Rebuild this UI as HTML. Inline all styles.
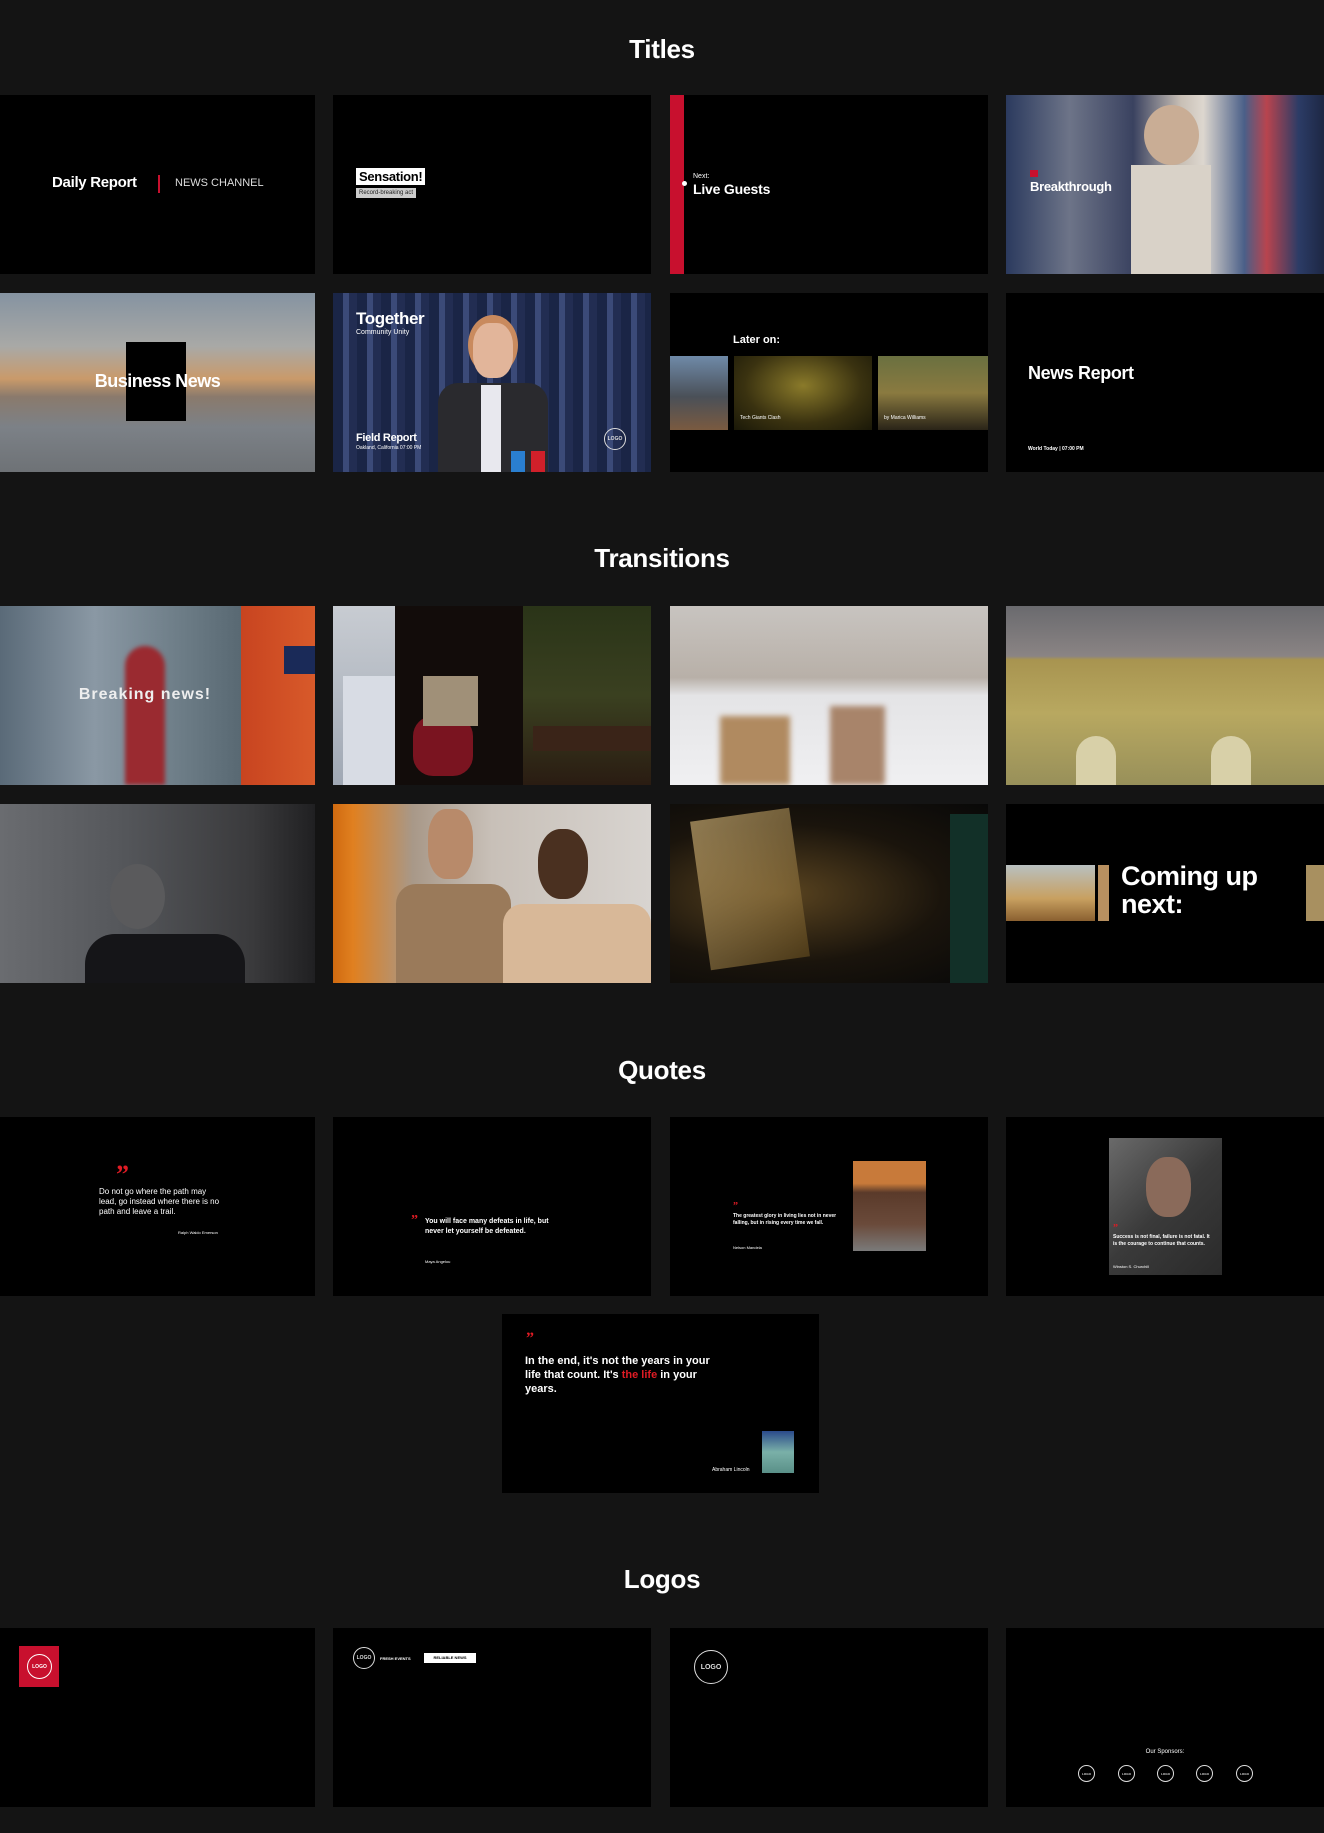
<!DOCTYPE html>
<html><head><meta charset="utf-8"><style>
*{margin:0;padding:0;box-sizing:border-box}
body{width:1324px;height:1833px;background:#141414;position:relative;overflow:hidden;font-family:"Liberation Sans",sans-serif;color:#fff}
.h{position:absolute;left:0;width:1324px;text-align:center;font-weight:bold;font-size:26px;letter-spacing:-0.3px}
.t{position:absolute;background:#000;overflow:hidden;height:179px}
.c0{left:0;width:315px}.c1{left:333px;width:318px}.c2{left:670px;width:318px}.c3{left:1006px;width:318px}
.a{position:absolute}
.b{font-weight:bold}
.circ{position:absolute;border:1.5px solid #ddd;border-radius:50%;font-size:5px;color:#ddd;display:flex;align-items:center;justify-content:center;font-weight:bold}
.q{color:#e01b24;font-weight:bold;font-family:"Liberation Serif",serif}
</style></head><body>

<div class="h" style="top:34px">Titles</div>
<div class="h" style="top:543px">Transitions</div>
<div class="h" style="top:1055px">Quotes</div>
<div class="h" style="top:1564px">Logos</div>

<!-- Row 1 -->
<div class="t c0" style="top:95px">
  <div class="a b" style="left:52px;top:79px;font-size:15px;letter-spacing:-0.3px">Daily Report</div>
  <div class="a" style="left:158px;top:80px;width:2px;height:18px;background:#c8102e"></div>
  <div class="a" style="left:175px;top:82px;font-size:11px;color:#ddd">NEWS CHANNEL</div>
</div>
<div class="t c1" style="top:95px">
  <div class="a" style="left:23px;top:73px;background:#fff;color:#000;font-size:13px;padding:1px 3px;font-weight:bold;letter-spacing:-0.3px">Sensation!</div>
  <div class="a" style="left:23px;top:93px;background:#ccc;color:#222;font-size:6px;padding:2px 3px">Record-breaking act</div>
</div>
<div class="t c2" style="top:95px">
  <div class="a" style="left:0;top:0;width:14px;height:179px;background:#c8102e"></div>
  <div class="a" style="left:12px;top:86px;width:5px;height:5px;border-radius:50%;background:#fff"></div>
  <div class="a" style="left:23px;top:78px;font-size:7px">Next:</div>
  <div class="a b" style="left:23px;top:86px;font-size:14px;letter-spacing:-0.2px">Live Guests</div>
</div>
<div class="t c3" style="top:95px;background:linear-gradient(90deg,#2b3a5e 0%,#6d7488 20%,#3a4260 40%,#c8bfb5 55%,#ddd7cf 62%,#4a5f88 75%,#b8444e 82%,#2c3c66 92%,#1d2744 100%)">
  <div class="a" style="left:138px;top:10px;width:55px;height:60px;border-radius:50%;background:#c9ad95"></div>
  <div class="a" style="left:125px;top:70px;width:80px;height:109px;background:#d9d2c8"></div>
  <div class="a" style="left:24px;top:75px;width:8px;height:7px;background:#c8102e"></div>
  <div class="a b" style="left:24px;top:84px;font-size:13px;letter-spacing:-0.3px">Breakthrough</div>
</div>

<!-- Row 2 -->
<div class="t c0" style="top:293px;background:linear-gradient(180deg,#8593a1 0%,#a9a9a6 30%,#c99a6a 48%,#8a7a6c 58%,#7c8187 75%,#6e7276 100%)">
  <div class="a" style="left:126px;top:49px;width:60px;height:79px;background:#000"></div>
  <div class="a b" style="left:0;width:315px;text-align:center;top:78px;font-size:18px;letter-spacing:-0.5px">Business News</div>
</div>
<div class="t c1" style="top:293px;background:repeating-linear-gradient(90deg,#1a2546 0 10px,#3b4a78 10px 16px,#222d52 16px 24px)">
  <div class="a" style="left:135px;top:22px;width:50px;height:60px;border-radius:50%;background:#c98a5e"></div>
  <div class="a" style="left:140px;top:30px;width:40px;height:55px;border-radius:40%;background:#e2b59a"></div>
  <div class="a" style="left:105px;top:90px;width:110px;height:89px;background:#2a2a2e;border-radius:20px 20px 0 0"></div>
  <div class="a" style="left:148px;top:92px;width:20px;height:87px;background:#e8e8ee"></div>
  <div class="a" style="left:178px;top:158px;width:14px;height:21px;background:#2a7fd0"></div>
  <div class="a" style="left:198px;top:158px;width:14px;height:21px;background:#d0202a"></div>
  <div class="a b" style="left:23px;top:16px;font-size:17px;letter-spacing:-0.4px">Together</div>
  <div class="a" style="left:23px;top:36px;font-size:7px">Community Unity</div>
  <div class="a b" style="left:23px;top:139px;font-size:11px;letter-spacing:-0.3px">Field Report</div>
  <div class="a" style="left:23px;top:152px;font-size:5px">Oakland, California 07:00 PM</div>
  <div class="circ" style="left:271px;top:135px;width:22px;height:22px">LOGO</div>
</div>
<div class="t c2" style="top:293px">
  <div class="a b" style="left:63px;top:41px;font-size:11px">Later on:</div>
  <div class="a" style="left:0;top:63px;width:58px;height:74px;background:linear-gradient(180deg,#6f8aa8,#4a5058 55%,#7a5a40)"></div>
  <div class="a" style="left:64px;top:63px;width:138px;height:74px;background:radial-gradient(ellipse at 50% 40%,#8a7a2a,#3a3210 60%,#1a1808)"></div>
  <div class="a" style="left:208px;top:63px;width:110px;height:74px;background:linear-gradient(180deg,#6a7040,#8a7a40 50%,#2a2418)"></div>
  <div class="a" style="left:70px;top:122px;font-size:5px">Tech Giants Clash</div>
  <div class="a" style="left:214px;top:122px;font-size:5px">by Marica Williams</div>
</div>
<div class="t c3" style="top:293px">
  <div class="a b" style="left:22px;top:70px;font-size:18px;letter-spacing:-0.4px">News Report</div>
  <div class="a" style="left:22px;top:153px;font-size:5px;font-weight:bold">World Today | 07:00 PM</div>
</div>

<!-- Row 3 -->
<div class="t c0" style="top:606px;background:linear-gradient(90deg,#5a6a78,#8a98a4 30%,#6a7a84 60%,#4a5a64 90%)">
  <div class="a" style="left:125px;top:40px;width:40px;height:139px;background:#9a2a30;border-radius:20px 20px 0 0;filter:blur(2px)"></div>
  <div class="a" style="left:241px;top:0;width:74px;height:179px;background:linear-gradient(90deg,#c84420,#d85a2a)"></div>
  <div class="a" style="left:284px;top:40px;width:31px;height:28px;background:#1a2a58"></div>
  <div class="a b" style="left:0;width:290px;text-align:center;top:80px;font-size:16px;color:#eee;letter-spacing:1px">Breaking news!</div>
</div>
<div class="t c1" style="top:606px;background:#1a1410">
  <div class="a" style="left:0;top:0;width:62px;height:179px;background:linear-gradient(180deg,#c8ccd2,#a0a8b4)"></div>
  <div class="a" style="left:10px;top:70px;width:52px;height:109px;background:#d8dce4"></div>
  <div class="a" style="left:62px;top:0;width:128px;height:179px;background:#120c0a"></div>
  <div class="a" style="left:80px;top:110px;width:60px;height:60px;background:#7a1420;border-radius:20px"></div>
  <div class="a" style="left:90px;top:70px;width:55px;height:50px;background:#a09078"></div>
  <div class="a" style="left:190px;top:0;width:128px;height:179px;background:linear-gradient(180deg,#2a3418,#3a4020 50%,#2a1c12)"></div>
  <div class="a" style="left:200px;top:120px;width:118px;height:25px;background:#3a2418"></div>
</div>
<div class="t c2" style="top:606px;background:linear-gradient(180deg,#c8c4c0 0%,#b8b0a8 40%,#e4e4e6 50%,#f0f0f2 100%)">
  <div class="a" style="left:50px;top:110px;width:70px;height:69px;background:#b08a60;filter:blur(3px)"></div>
  <div class="a" style="left:160px;top:100px;width:55px;height:79px;background:#a8846a;filter:blur(3px)"></div>
</div>
<div class="t c3" style="top:606px;background:linear-gradient(180deg,#6a6a6e 0,#8a8484 28%,#a89450 30%,#b8a860 60%,#98905a 100%)">
  <div class="a" style="left:70px;top:130px;width:40px;height:49px;background:#d8d0a8;border-radius:20px 20px 0 0"></div>
  <div class="a" style="left:205px;top:130px;width:40px;height:49px;background:#d8d0a8;border-radius:20px 20px 0 0"></div>
</div>

<!-- Row 4 -->
<div class="t c0" style="top:804px;background:linear-gradient(90deg,#6a6c70,#54565a 40%,#3a3a3c 80%,#202022)">
  <div class="a" style="left:85px;top:130px;width:160px;height:60px;background:#151518;border-radius:30px 30px 0 0"></div>
  <div class="a" style="left:110px;top:60px;width:55px;height:65px;background:#5a5a5c;border-radius:50%"></div>
</div>
<div class="t c1" style="top:804px;background:linear-gradient(90deg,#d06a10 0,#e08020 20px,#a89888 25%,#c8c0b8 50%,#d8d4d0 100%)">
  <div class="a" style="left:63px;top:80px;width:115px;height:99px;background:#9a7a5a;border-radius:20px 20px 0 0"></div>
  <div class="a" style="left:95px;top:5px;width:45px;height:70px;background:#b88a6a;border-radius:40%"></div>
  <div class="a" style="left:170px;top:100px;width:148px;height:79px;background:#d8b898;border-radius:20px 20px 0 0"></div>
  <div class="a" style="left:205px;top:25px;width:50px;height:70px;background:#4a3020;border-radius:45%"></div>
</div>
<div class="t c2" style="top:804px;background:radial-gradient(ellipse at 35% 50%,#5a4420,#1a140c 55%,#080808)">
  <div class="a" style="left:30px;top:10px;width:100px;height:150px;background:linear-gradient(135deg,#e0c080,#6a5020);opacity:.6;transform:rotate(-8deg)"></div>
  <div class="a" style="left:280px;top:10px;width:38px;height:169px;background:#123028"></div>
</div>
<div class="t c3" style="top:804px">
  <div class="a" style="left:0;top:61px;width:89px;height:56px;background:linear-gradient(180deg,#b8c0c0,#c8a060 60%,#8a6030)"></div>
  <div class="a" style="left:92px;top:61px;width:11px;height:56px;background:#b89060"></div>
  <div class="a b" style="left:115px;top:58px;font-size:27px;line-height:28px;letter-spacing:-0.5px">Coming up<br>next:</div>
  <div class="a" style="left:300px;top:61px;width:18px;height:56px;background:#a89060"></div>
</div>

<!-- Row 5 quotes -->
<div class="t c0" style="top:1117px">
  <div class="a q" style="left:116px;top:43px;font-size:26px">”</div>
  <div class="a" style="left:99px;top:70px;font-size:8px;line-height:10px;width:125px">Do not go where the path may lead, go instead where there is no path and leave a trail.</div>
  <div class="a" style="left:178px;top:113px;font-size:4px">Ralph Waldo Emerson</div>
</div>
<div class="t c1" style="top:1117px">
  <div class="a q" style="left:78px;top:96px;font-size:14px">”</div>
  <div class="a b" style="left:92px;top:100px;font-size:7px;line-height:10px;width:140px">You will face many defeats in life, but never let yourself be defeated.</div>
  <div class="a" style="left:92px;top:142px;font-size:4px">Maya Angelou</div>
</div>
<div class="t c2" style="top:1117px">
  <div class="a" style="left:183px;top:44px;width:73px;height:90px;background:linear-gradient(180deg,#c87a3a 0,#c87a3a 25%,#5a3a2a 35%,#6a4a3a 70%,#7a7a7a 100%)"></div>
  <div class="a q" style="left:63px;top:84px;font-size:10px">”</div>
  <div class="a b" style="left:63px;top:96px;font-size:5px;line-height:7px;width:110px">The greatest glory in living lies not in never falling, but in rising every time we fall.</div>
  <div class="a" style="left:63px;top:128px;font-size:4px">Nelson Mandela</div>
</div>
<div class="t c3" style="top:1117px">
  <div class="a" style="left:103px;top:21px;width:113px;height:137px;background:linear-gradient(135deg,#6a6a6a,#3a3a3a 50%,#2a2a2a)"></div>
  <div class="a" style="left:140px;top:40px;width:45px;height:60px;background:#8a6a5a;border-radius:45%"></div>
  <div class="a q" style="left:107px;top:106px;font-size:10px">”</div>
  <div class="a b" style="left:107px;top:117px;font-size:5px;line-height:7px;width:100px">Success is not final, failure is not fatal. It is the courage to continue that counts.</div>
  <div class="a" style="left:107px;top:147px;font-size:4px">Winston S. Churchill</div>
</div>
<div class="t" style="left:502px;width:317px;top:1314px">
  <div class="a q" style="left:24px;top:16px;font-size:16px">”</div>
  <div class="a b" style="left:23px;top:40px;font-size:11px;line-height:14px;width:185px">In the end, it's not the years in your life that count. It's <span style="color:#e01b24">the life</span> in your years.</div>
  <div class="a" style="left:260px;top:117px;width:32px;height:42px;background:linear-gradient(180deg,#2a4a8a,#7ab0a8 50%,#5a9088)"></div>
  <div class="a" style="left:210px;top:153px;font-size:5px">Abraham Lincoln</div>
</div>

<!-- Row 7 logos -->
<div class="t c0" style="top:1628px">
  <div class="a" style="left:19px;top:18px;width:40px;height:41px;background:#c8102e"></div>
  <div class="circ" style="left:27px;top:26px;width:25px;height:25px;border-color:#fff;color:#fff">LOGO</div>
</div>
<div class="t c1" style="top:1628px">
  <div class="circ" style="left:20px;top:19px;width:22px;height:22px">LOGO</div>
  <div class="a b" style="left:47px;top:28px;font-size:4px">FRESH EVENTS</div>
  <div class="a b" style="left:91px;top:25px;width:52px;height:10px;background:#fff;color:#000;font-size:4px;text-align:center;line-height:10px">RELIABLE NEWS</div>
</div>
<div class="t c2" style="top:1628px">
  <div class="circ" style="left:24px;top:22px;width:34px;height:34px;font-size:7px">LOGO</div>
</div>
<div class="t c3" style="top:1628px">
  <div class="a" style="left:0;width:318px;text-align:center;top:121px;font-size:6px">Our Sponsors:</div>
  <div class="circ" style="left:72px;top:137px;width:17px;height:17px;font-size:3px">LOGO</div>
  <div class="circ" style="left:112px;top:137px;width:17px;height:17px;font-size:3px">LOGO</div>
  <div class="circ" style="left:151px;top:137px;width:17px;height:17px;font-size:3px">LOGO</div>
  <div class="circ" style="left:190px;top:137px;width:17px;height:17px;font-size:3px">LOGO</div>
  <div class="circ" style="left:230px;top:137px;width:17px;height:17px;font-size:3px">LOGO</div>
</div>

</body></html>
